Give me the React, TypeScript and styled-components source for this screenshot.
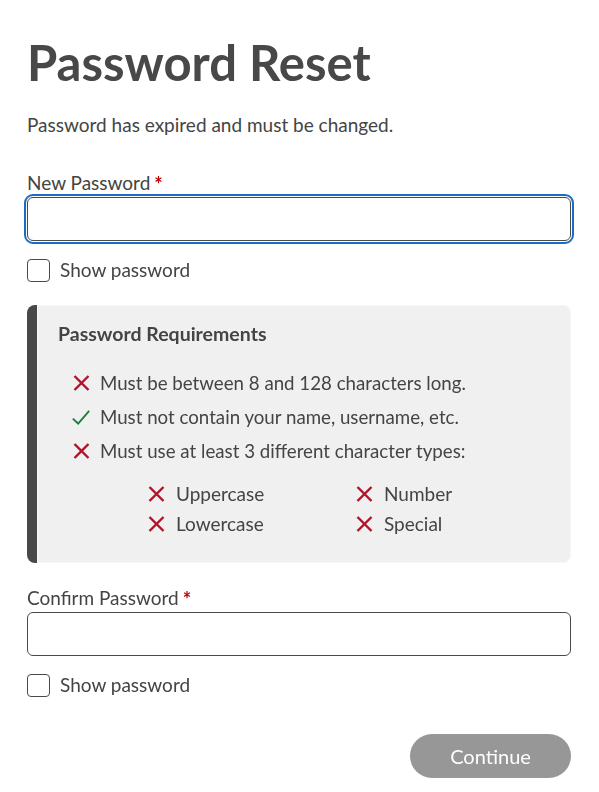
import { createGlobalStyle, styled } from "styled-components";

const GlobalStyle = createGlobalStyle`
  body {
    margin: 0;
    background: #ffffff;
    font-family: "Lato", "Liberation Sans", sans-serif;
    color: #444444;
  }
`;

const Page = styled.main`
  padding: 32px 28px 0 27px;
  display: flex;
  flex-direction: column;
`;

const Title = styled.h1`
  margin: 0;
  font-size: 49px;
  line-height: 60px;
  font-weight: 700;
  color: #484848;
`;

const Intro = styled.p`
  margin: 21px 0 0;
  font-size: 19px;
  line-height: 24px;
`;

const Label = styled.label<{ $top: number }>`
  display: block;
  margin-top: ${(p) => p.$top}px;
  font-size: 19px;
  line-height: 24px;
`;

const Required = styled.span`
  color: #c00000;
  margin-left: 4px;
  font-weight: 700;
  font-size: 20px;
  line-height: 0;
  position: relative;
  top: 2px;
`;

const TextInput = styled.input`
  display: block;
  box-sizing: border-box;
  width: 100%;
  height: 44px;
  margin-top: 2px;
  padding: 0 10px;
  border: 1px solid #4a4a4a;
  border-radius: 6px;
  font: inherit;
  font-size: 19px;
  color: #333;
  background: #fff;

  &:focus {
    outline: 2px solid #1a6dc2;
    outline-offset: 1px;
  }
`;

const CheckRow = styled.label`
  display: flex;
  align-items: center;
  gap: 10px;
  margin-top: 17px;
  font-size: 19px;
  line-height: 24px;
`;

const Box = styled.input`
  appearance: none;
  margin: 0;
  width: 23px;
  height: 23px;
  border: 1px solid #4a4a4a;
  border-radius: 4px;
  background: #fff;
`;

const Requirements = styled.section`
  margin-top: 23px;
  padding: 17px 20px 27px 21px;
  background: #f0f0f0;
  border-left: 10px solid #484848;
  border-radius: 8px;
  box-shadow: inset 0 0 0 1px #f7f7f7;
`;

const ReqTitle = styled.h2`
  margin: 0;
  font-size: 19.5px;
  line-height: 24px;
  font-weight: 700;
`;

const RuleList = styled.ul`
  list-style: none;
  margin: 25px 0 0;
  padding: 0 0 0 14px;
  display: flex;
  flex-direction: column;
  gap: 10px;
`;

const Rule = styled.li`
  display: flex;
  align-items: center;
  gap: 10px;
  font-size: 18.7px;
  line-height: 24px;
`;

const TypeGrid = styled.ul`
  list-style: none;
  margin: 19px 0 0;
  padding: 0 0 0 90px;
  display: grid;
  grid-template-columns: 208px 1fr;
  row-gap: 6px;
`;

const TypeItem = styled.li`
  display: flex;
  align-items: center;
  gap: 11px;
  font-size: 19px;
  line-height: 24px;
`;

const IconSlot = styled.span`
  display: inline-flex;
  width: 18px;
  justify-content: center;
  flex-shrink: 0;
`;

const Actions = styled.div`
  display: flex;
  justify-content: flex-end;
  margin-top: 37px;
`;

const ContinueButton = styled.button`
  width: 161px;
  height: 44px;
  border: none;
  border-radius: 22px;
  background: #979797;
  color: #ffffff;
  font: inherit;
  font-size: 20px;
  cursor: not-allowed;
`;

function Cross() {
  return (
    <svg width="17" height="16" viewBox="0 0 17 16" aria-hidden>
      <path d="M1.5 1 L15.5 15 M15.5 1 L1.5 15" stroke="#b3122b" strokeWidth="2.4" fill="none" />
    </svg>
  );
}

function Tick() {
  return (
    <svg width="22" height="18" viewBox="0 0 22 18" aria-hidden>
      <path d="M1 11 L7.5 17 L21 1.5" stroke="#1b7f3e" strokeWidth="2.3" fill="none" />
    </svg>
  );
}

const rules = [
  { ok: false, text: "Must be between 8 and 128 characters long." },
  { ok: true, text: "Must not contain your name, username, etc." },
  { ok: false, text: "Must use at least 3 different character types:" },
];

const types = ["Uppercase", "Number", "Lowercase", "Special"];

export default function App() {
  return (
    <>
      <GlobalStyle />
      <Page>
        <Title>Password Reset</Title>
        <Intro>Password has expired and must be changed.</Intro>

        <Label $top={34} htmlFor="new-password">
          New Password<Required>*</Required>
        </Label>
        <TextInput id="new-password" type="password" autoFocus />
        <CheckRow>
          <Box type="checkbox" />
          Show password
        </CheckRow>

        <Requirements>
          <ReqTitle>Password Requirements</ReqTitle>
          <RuleList>
            {rules.map((r) => (
              <Rule key={r.text}>
                <IconSlot>{r.ok ? <Tick /> : <Cross />}</IconSlot>
                {r.text}
              </Rule>
            ))}
          </RuleList>
          <TypeGrid>
            {types.map((t) => (
              <TypeItem key={t}>
                <Cross />
                {t}
              </TypeItem>
            ))}
          </TypeGrid>
        </Requirements>

        <Label $top={23} htmlFor="confirm-password">
          Confirm Password<Required>*</Required>
        </Label>
        <TextInput id="confirm-password" type="password" />
        <CheckRow>
          <Box type="checkbox" />
          Show password
        </CheckRow>

        <Actions>
          <ContinueButton disabled>Continue</ContinueButton>
        </Actions>
      </Page>
    </>
  );
}
